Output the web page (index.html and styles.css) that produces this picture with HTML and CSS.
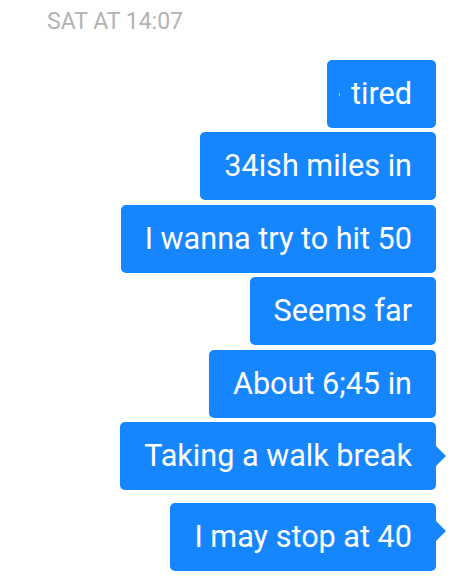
FILE: index.html
```html
<!DOCTYPE html>
<html lang="en">
<head>
  <meta charset="UTF-8">
  <meta name="viewport" content="width=device-width, initial-scale=1.0">
  <title>Messages</title>
  <link rel="stylesheet" href="styles.css">
</head>
<body>
  <div class="thread">
    <div class="timestamp">SAT AT 14:07</div>

    <!-- Sent messages -->
    <div class="messages">
      <div class="bubble"><span class="caret"></span>tired</div>
      <div class="bubble">34ish miles in</div>
      <div class="bubble">I wanna try to hit 50</div>
      <div class="bubble">Seems far</div>
      <div class="bubble">About 6;45 in</div>
      <div class="bubble tail">Taking a walk break</div>
      <div class="bubble tail last">I may stop at 40</div>
    </div>
  </div>
</body>
</html>
```

FILE: styles.css
```css
body {
  margin: 0;
  padding: 0;
  background-color: #ffffff;
  font-family: Roboto, "Liberation Sans", Arial, sans-serif;
}
.thread {
  display: flex;
  flex-direction: column;
  padding: 8px 18px 0 47px;
}
.timestamp {
  color: #b3b3b3;
  font-size: 23px;
  line-height: 28px;
  height: 28px;
}
.messages {
  display: flex;
  flex-direction: column;
  align-items: flex-end;
  gap: 4.5px;
  margin-top: 23.5px;
}
.bubble {
  position: relative;
  height: 68px;
  line-height: 68px;
  padding: 0 24px;
  background-color: #1686ff;
  color: #ffffff;
  font-size: 30.6px;
  border-radius: 5px;
  white-space: nowrap;
}
.caret {
  position: absolute;
  left: 12px;
  top: 33px;
  width: 1px;
  height: 3px;
  background-color: rgba(255, 255, 255, 0.6);
}
.tail::after {
  content: "";
  position: absolute;
  right: -10px;
  top: 50%;
  margin-top: -10px;
  border-left: 10px solid #1686ff;
  border-top: 10px solid transparent;
  border-bottom: 10px solid transparent;
}
.last {
  margin-top: 8px;
}
.last::after {
  margin-top: -16px;
}
```
